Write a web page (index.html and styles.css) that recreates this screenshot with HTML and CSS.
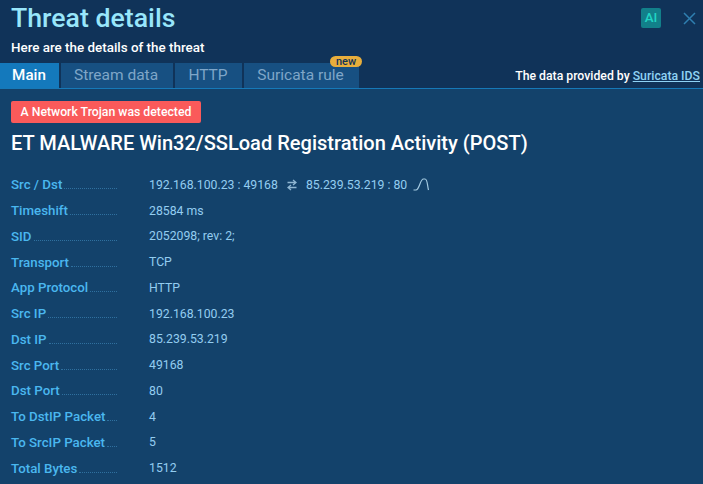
FILE: index.html
```html
<!DOCTYPE html>
<html lang="en">
<head>
<meta charset="utf-8">
<title>Threat details</title>
<link rel="stylesheet" href="styles.css">
</head>
<body>
<header class="head">
  <div class="head-top">
    <h1 class="title">Threat details</h1>
    <div class="head-actions">
      <span class="ai">AI</span>
      <svg class="close" width="13" height="13" viewBox="0 0 13 13"><path d="M1 1l11 11M12 1L1 12" stroke="#2f7fb0" stroke-width="1.5" fill="none"/></svg>
    </div>
  </div>
  <p class="subtitle">Here are the details of the threat</p>
  <div class="tabbar">
    <nav class="tabs">
      <span class="tab tab-active">Main</span>
      <span class="tab tab-stream">Stream data</span>
      <span class="tab tab-http">HTTP</span>
      <span class="tab tab-rule">Suricata rule<span class="new">new</span></span>
    </nav>
    <p class="provider">The data provided by <a href="#">Suricata IDS</a></p>
  </div>
</header>
<main class="content">
  <div class="alert">A Network Trojan was detected</div>
  <h2 class="sig">ET MALWARE Win32/SSLoad Registration Activity (POST)</h2>
  <dl class="rows">
    <div class="row"><dt><span>Src / Dst</span></dt><dd class="flow">192.168.100.23 : 49168
      <svg class="swap" width="10" height="12" viewBox="0 0 10 12"><path d="M0.5 3.5H9M6 1L9 3.5L6 6M9.5 8.5H1M4 6L1 8.5L4 11" stroke="#8fb6d2" stroke-width="1.3" fill="none"/></svg>
      85.239.53.219 : 80
      <svg class="wave" width="17" height="13" viewBox="0 0 17 13"><path d="M0.5 12H3C6.5 12 7 1 10.5 1H12C14.5 1 14 6 15.5 12" stroke="#a5cbe2" stroke-width="1.2" fill="none"/></svg>
    </dd></div>
    <div class="row"><dt><span>Timeshift</span></dt><dd>28584 ms</dd></div>
    <div class="row"><dt><span>SID</span></dt><dd>2052098; rev: 2;</dd></div>
    <div class="row"><dt><span>Transport</span></dt><dd>TCP</dd></div>
    <div class="row"><dt><span>App Protocol</span></dt><dd>HTTP</dd></div>
    <div class="row"><dt><span>Src IP</span></dt><dd>192.168.100.23</dd></div>
    <div class="row"><dt><span>Dst IP</span></dt><dd>85.239.53.219</dd></div>
    <div class="row"><dt><span>Src Port</span></dt><dd>49168</dd></div>
    <div class="row"><dt><span>Dst Port</span></dt><dd>80</dd></div>
    <div class="row"><dt><span>To DstIP Packet</span></dt><dd>4</dd></div>
    <div class="row"><dt><span>To SrcIP Packet</span></dt><dd>5</dd></div>
    <div class="row"><dt><span>Total Bytes</span></dt><dd>1512</dd></div>
  </dl>
</main>
</body>
</html>
```
FILE: styles.css
```css
* { box-sizing: border-box; }
html, body { margin: 0; height: 100%; overflow: hidden; }
body { background: #13426b; font-family: Roboto, sans-serif; color: #fff; }
.head { background: #103359; height: 89px; border-bottom: 1px solid #1679b8; }
.head-top { display: flex; justify-content: space-between; height: 39px; padding: 0 7px 0 11px; }
.title { margin: 0; font-size: 26.7px; line-height: 36px; font-weight: 500; color: #98e6fb; }
.head-actions { display: flex; align-items: flex-start; padding-top: 8px; gap: 22px; }
.ai { width: 20px; height: 20px; border-radius: 2px; background: #12808a; color: #21d5c5; font-size: 13.3px; font-weight: 500; line-height: 20px; text-align: center; }
.close { margin-top: 4px; }
.subtitle { margin: 0; padding-left: 11px; font-size: 13.4px; line-height: 18px; font-weight: 500; height: 24px; }
.tabbar { display: flex; justify-content: space-between; align-items: center; padding-right: 3px; }
.tabs { display: flex; gap: 2px; height: 25px; }
.tab { position: relative; background: #175082; color: #7fa6c8; font-size: 15.5px; line-height: 25px; text-align: center; }
.tab-active { width: 59px; background: #1479bc; color: #fff; font-size: 15.2px; font-weight: 500; padding-right: 1px; }
.tab-stream { width: 112px; padding-right: 2px; }
.tab-http { width: 67px; padding-right: 1px; }
.tab-rule { width: 115px; padding-right: 2px; }
.new { position: absolute; right: -3px; top: -7px; width: 32px; height: 11px; border-radius: 6px; background: #e8ae3c; color: #103359; font-size: 11px; font-weight: 500; line-height: 11px; }
.provider { margin: 0; font-size: 12.25px; font-weight: 500; }
.provider a { color: #90d3f5; }
.content { padding: 12px 11px 0; }
.alert { width: 190px; height: 22px; border-radius: 2px; background: #fa5a5a; font-size: 12.25px; font-weight: 500; line-height: 22px; text-align: center; }
.sig { margin: 6px 0 0; font-size: 20.05px; line-height: 28px; font-weight: 500; white-space: nowrap; }
.rows { margin: 15px 0 0; }
.row { display: flex; height: 25.75px; align-items: center; font-size: 12.25px; }
.row dt { width: 138px; flex: none; font-size: 13.3px; font-weight: 500; color: #4ab7ef; }
.row dt span { display: flex; width: 106px; white-space: nowrap; align-items: baseline; }
.row dt span::after { content: ""; flex: 1; margin-left: 2px; border-bottom: 1px dotted #2f709f; height: 1px; }
.row dd { margin: 0; color: #93cdf0; }
.flow { display: flex; align-items: center; gap: 9px; }
.wave { margin-left: -3px; }
```
